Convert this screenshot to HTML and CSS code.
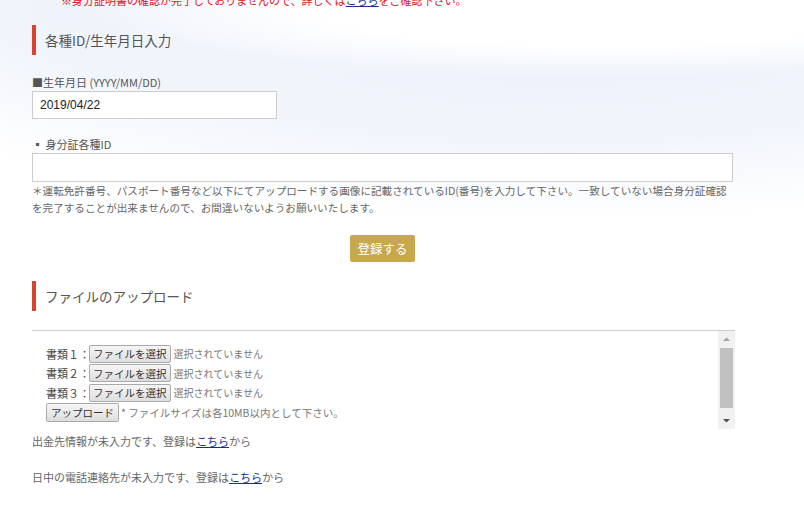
FILE: index.html
```html
<!DOCTYPE html>
<html lang="ja">
<head>
    <meta charset="UTF-8">
    <meta name="viewport" content="width=device-width, initial-scale=1.0">
    <title>本人確認書類の登録</title>
    <link rel="stylesheet" href="styles.css">
</head>
<body>
    <div class="page">
        <!-- 上部のお知らせ（スクロールで半分隠れている） -->
        <p class="notice">※身分証明書の確認が完了しておりませんので、詳しくは<a href="#">こちら</a>をご確認下さい。</p>

        <!-- 各種ID / 生年月日 -->
        <h2 class="section-title">各種ID/生年月日入力</h2>

        <form class="id-form">
            <label class="field-label" for="birthday">■生年月日 (YYYY/MM/DD)</label>
            <input class="text-input birthday" type="text" id="birthday" value="2019/04/22">

            <label class="field-label second" for="idnum">▪ 身分証各種ID</label>
            <input class="text-input wide" type="text" id="idnum">
            <p class="note">＊運転免許番号、パスポート番号など以下にてアップロードする画像に記載されているID(番号)を入力して下さい。一致していない場合身分証確認を完了することが出来ませんので、お間違いないようお願いいたします。</p>

            <div class="submit-row">
                <button class="submit-btn" type="button">登録する</button>
            </div>
        </form>

        <!-- ファイルのアップロード -->
        <h2 class="section-title upload-title">ファイルのアップロード</h2>

        <div class="upload-box">
            <div class="upload-list">
                <div class="upload-row">書類１：<span class="file-btn">ファイルを選択</span><span class="file-none">選択されていません</span></div>
                <div class="upload-row">書類２：<span class="file-btn">ファイルを選択</span><span class="file-none">選択されていません</span></div>
                <div class="upload-row">書類３：<span class="file-btn">ファイルを選択</span><span class="file-none">選択されていません</span></div>
                <div class="upload-row"><span class="file-btn upload-btn">アップロード</span><span class="size-note">* ファイルサイズは各10MB以内として下さい。</span></div>
            </div>
            <!-- Scrollbalken (nachgebildet) -->
            <div class="scrollbar">
                <div class="scroll-arrow">
                    <svg width="17" height="17" viewBox="0 0 17 17"><path d="M5 10h7L8.5 6.5z" fill="#a3a3a3"/></svg>
                </div>
                <div class="scroll-track"><div class="scroll-thumb"></div></div>
                <div class="scroll-arrow">
                    <svg width="17" height="17" viewBox="0 0 17 17"><path d="M5 7h7L8.5 10.5z" fill="#505050"/></svg>
                </div>
            </div>
        </div>

        <p class="missing">出金先情報が未入力です、登録は<a href="#">こちら</a>から</p>
        <p class="missing second">日中の電話連絡先が未入力です、登録は<a href="#">こちら</a>から</p>
    </div>
</body>
</html>
```

FILE: styles.css
```css
/* Grundlayout */
* {
    box-sizing: border-box;
    margin: 0;
    padding: 0;
}

body {
    font-family: "Noto Sans CJK JP", "Liberation Sans", sans-serif;
    color: #555;
    background:
        radial-gradient(ellipse 520px 70px at 600px 8px, #fff 55%, rgba(255, 255, 255, 0) 100%),
        radial-gradient(ellipse 720px 170px at 560px 50px, #ecf1fa 0%, rgba(236, 241, 250, 0.7) 55%, rgba(255, 255, 255, 0) 100%),
        radial-gradient(ellipse 260px 120px at 60px 10px, #f0f4fa 0%, rgba(255, 255, 255, 0) 100%),
        #fff;
    min-height: 100vh;
    overflow: hidden;
}

.page {
    width: 703px;
    margin-left: 32px;
}

a {
    color: #1a2a9a;
    text-decoration: underline;
}

.notice {
    margin: -8px 0 0 29px;
    font-size: 11px;
    line-height: 16px;
    color: #e0141e;
    white-space: nowrap;
}

/* Abschnittsüberschrift mit rotem Balken */
.section-title {
    margin-top: 17px;
    height: 30px;
    line-height: 30px;
    border-left: 4px solid #d8432b;
    padding-left: 9px;
    font-size: 13.5px;
    font-weight: normal;
    color: #555;
}

.upload-title {
    margin-top: 19px;
}

.field-label {
    display: block;
    margin-top: 19px;
    font-size: 11px;
    line-height: 16px;
    color: #555;
}

.field-label.second {
    margin-top: 17px;
}

.text-input {
    display: block;
    margin-top: 1px;
    height: 28px;
    border: 1px solid #ccc;
    background: #fff;
    padding: 0 7px;
    font-family: "Liberation Sans", sans-serif;
    font-size: 12px;
    color: #222;
    outline: none;
}

.birthday {
    width: 245px;
}

.wide {
    width: 701px;
    height: 29px;
}

.note {
    width: 701px;
    font-size: 10.6px;
    line-height: 17px;
    color: #666;
}

.submit-row {
    display: flex;
    justify-content: center;
    width: 701px;
    margin-top: 19px;
}

.submit-btn {
    width: 65px;
    height: 27px;
    border: none;
    border-radius: 2px;
    background: #c9a74b;
    color: #fff;
    font-family: "Noto Sans CJK JP", sans-serif;
    font-size: 12.5px;
}

/* Upload-Bereich */
.upload-box {
    display: flex;
    margin-top: 19px;
    height: 99px;
    border-top: 1px solid #ccc;
    background: #fff;
    overflow: hidden;
    font-size: 11px;
    color: #444;
}

.upload-list {
    flex: 1;
    padding: 13px 0 0 14px;
}

.upload-row {
    display: flex;
    align-items: center;
    height: 19.5px;
    white-space: nowrap;
}

.file-btn {
    display: inline-flex;
    align-items: center;
    height: 18px;
    padding: 0 3px;
    margin: 0 3px 0 -1px;
    border: 1px solid #a9a9a9;
    border-radius: 2px;
    background: linear-gradient(#f6f6f6, #dedede);
    font-size: 10.5px;
    color: #333;
}

.upload-btn {
    height: 19px;
    padding: 0 4px;
    margin: 0 2px 0 0;
}

.file-none {
    font-size: 10px;
    color: #777;
}

.size-note {
    font-size: 10.5px;
    color: #777;
}

.scrollbar {
    display: flex;
    flex-direction: column;
    width: 17px;
    background: #f1f1f1;
}

.scroll-arrow {
    height: 17px;
}

.scroll-arrow svg {
    display: block;
}

.scroll-track {
    flex: 1;
    padding: 0 2px;
}

.scroll-thumb {
    height: 60px;
    background: #c1c1c1;
}

.missing {
    margin-top: 4px;
    font-size: 11px;
    line-height: 16px;
    color: #666;
}

.missing.second {
    margin-top: 20px;
}
```
